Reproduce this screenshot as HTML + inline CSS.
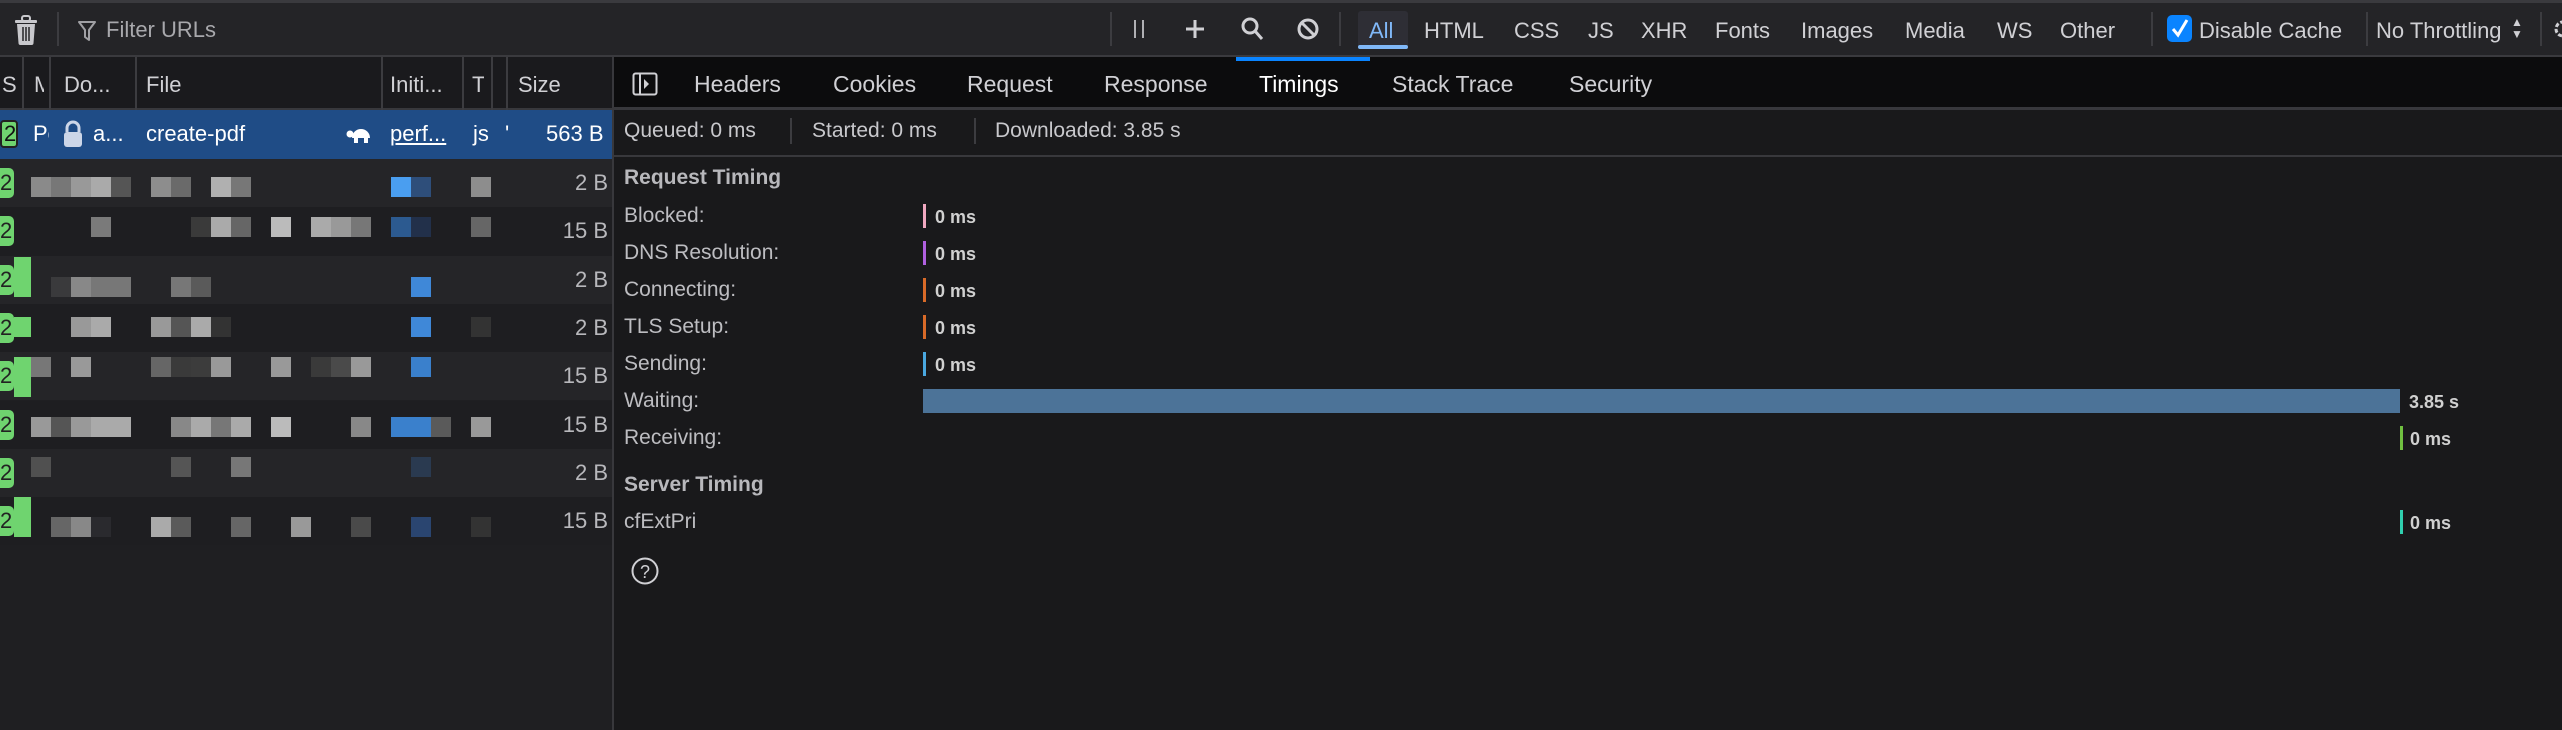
<!DOCTYPE html>
<html><head><meta charset="utf-8"><style>
*{margin:0;padding:0;box-sizing:border-box}
body{width:2562px;height:730px;background:#19191b;font-family:"Liberation Sans",sans-serif;color:#d0d0d4;position:relative;overflow:hidden}
.a{position:absolute;white-space:nowrap}
.t{font-size:22px;line-height:26px}
.sep{position:absolute;width:2px;background:#3c3c40}
.blk{position:absolute;width:20px;height:20px}
.tick{position:absolute;width:3px;height:24px}
.ms{position:absolute;font-size:18px;font-weight:bold;color:#d0d0d0}
.lbl{position:absolute;font-size:21px;color:#bdbdc1;left:624px}
</style></head><body>
<!-- toolbar -->
<div class="a" style="left:0;top:0;width:2562px;height:57px;background:#242427;border-top:3px solid #3a3a3e;border-bottom:2px solid #3a3a3e"></div>
<svg class="a" style="left:13px;top:14px" width="26" height="32" viewBox="0 0 26 32"><rect x="2" y="6" width="22" height="3" rx="1" fill="#c8c8cc"/><rect x="9" y="2" width="8" height="5" rx="2" fill="none" stroke="#c8c8cc" stroke-width="2"/><path d="M4 10h18l-1.5 19a2 2 0 0 1-2 2h-11a2 2 0 0 1-2-2z" fill="#c8c8cc"/><path d="M10 13v14M13 13v14M16 13v14" stroke="#242427" stroke-width="1.5"/></svg>
<div class="sep" style="left:57px;top:12px;height:34px"></div>
<svg class="a" style="left:78px;top:20px" width="18" height="22" viewBox="0 0 18 22"><path d="M1 2h16l-6 8v10l-4-3v-7z" fill="none" stroke="#a0a0a4" stroke-width="2" stroke-linejoin="round"/></svg>
<div class="a t" style="left:106px;top:17px;color:#a8a8ac">Filter URLs</div>
<div class="sep" style="left:1110px;top:12px;height:34px"></div>
<div class="a" style="left:1134px;top:20px;width:2px;height:18px;background:#b0b0b4"></div>
<div class="a" style="left:1142px;top:20px;width:2px;height:18px;background:#b0b0b4"></div>
<svg class="a" style="left:1184px;top:18px" width="22" height="22"><path d="M11 2v18M2 11h18" stroke="#d0d0d4" stroke-width="3"/></svg>
<svg class="a" style="left:1240px;top:16px" width="24" height="26"><circle cx="10" cy="10" r="7" fill="none" stroke="#d0d0d4" stroke-width="3"/><path d="M15 15l7 8" stroke="#d0d0d4" stroke-width="3"/></svg>
<svg class="a" style="left:1296px;top:17px" width="24" height="24"><circle cx="12" cy="12" r="9" fill="none" stroke="#d0d0d4" stroke-width="3"/><path d="M6 6l12 12" stroke="#d0d0d4" stroke-width="3"/></svg>
<div class="sep" style="left:1339px;top:12px;height:34px"></div>
<div class="a" style="left:1358px;top:11px;width:50px;height:38px;background:#2e2e35;border-radius:3px"></div>
<div class="a" style="left:1358px;top:45px;width:50px;height:4px;background:#80b8f8;border-radius:2px"></div>
<div class="a t" style="left:1369px;top:18px;color:#80b8f8">All</div>
<div class="a t" style="left:1424px;top:18px">HTML</div>
<div class="a t" style="left:1514px;top:18px">CSS</div>
<div class="a t" style="left:1588px;top:18px">JS</div>
<div class="a t" style="left:1641px;top:18px">XHR</div>
<div class="a t" style="left:1715px;top:18px">Fonts</div>
<div class="a t" style="left:1801px;top:18px">Images</div>
<div class="a t" style="left:1905px;top:18px">Media</div>
<div class="a t" style="left:1997px;top:18px">WS</div>
<div class="a t" style="left:2060px;top:18px">Other</div>
<div class="sep" style="left:2151px;top:12px;height:34px"></div>
<div class="a" style="left:2167px;top:15px;width:25px;height:27px;background:#0a84ff;border-radius:5px"></div>
<svg class="a" style="left:2170px;top:17px" width="20" height="22"><path d="M3 12l5 6L17 3" fill="none" stroke="#fff" stroke-width="3"/></svg>
<div class="a t" style="left:2199px;top:18px">Disable Cache</div>
<div class="sep" style="left:2366px;top:12px;height:34px"></div>
<div class="a t" style="left:2376px;top:18px">No Throttling</div>
<div class="a" style="left:2511px;top:16px;font-size:12px;line-height:12px;color:#d0d0d4">▲<br>▼</div>
<div class="sep" style="left:2540px;top:12px;height:34px"></div>
<svg class="a" style="left:2552px;top:18px" width="12" height="22"><circle cx="11" cy="11" r="7" fill="none" stroke="#d0d0d4" stroke-width="3" stroke-dasharray="4 2"/></svg>
<!-- left panel -->
<div class="a" style="left:0;top:57px;width:614px;height:673px;background:#1f1f22"></div>
<div class="a" style="left:0;top:57px;width:614px;height:53px;background:#1a1a1d;border-bottom:2px solid #38383c"></div>
<div class="sep" style="left:22px;top:57px;height:53px"></div>
<div class="sep" style="left:49px;top:57px;height:53px"></div>
<div class="sep" style="left:135px;top:57px;height:53px"></div>
<div class="sep" style="left:381px;top:57px;height:53px"></div>
<div class="sep" style="left:462px;top:57px;height:53px"></div>
<div class="sep" style="left:491px;top:57px;height:53px"></div>
<div class="sep" style="left:506px;top:57px;height:53px"></div>
<div class="a t" style="left:2px;top:72px">S</div>
<div class="a t" style="left:34px;top:72px;width:10px;overflow:hidden">M</div>
<div class="a t" style="left:64px;top:72px">Do...</div>
<div class="a t" style="left:146px;top:72px">File</div>
<div class="a t" style="left:390px;top:72px">Initi...</div>
<div class="a t" style="left:472px;top:72px;width:12px;overflow:hidden">T</div>
<div class="a t" style="left:518px;top:72px">Size</div>
<div id="rows"></div>
<!-- row 1 -->
<div class="a" style="left:0;top:110px;width:612px;height:49px;background:#1f4c86"></div>
<div class="a" style="left:0;top:120px;width:18px;height:28px;background:#6fd46f;border:2px solid #222;border-radius:4px;color:#111;font-size:22px;line-height:24px;overflow:hidden;padding-left:2px">2</div>
<div class="a t" style="left:33px;top:121px;color:#fff;width:16px;overflow:hidden">Po</div>
<svg class="a" style="left:62px;top:119px" width="22" height="30"><path d="M5 13V9a6 6 0 0 1 12 0v4" fill="none" stroke="#ccd6e8" stroke-width="3"/><rect x="2" y="13" width="18" height="15" rx="3" fill="#ccd6e8"/></svg>
<div class="a t" style="left:93px;top:121px;color:#fff">a...</div>
<div class="a t" style="left:146px;top:121px;color:#fff">create-pdf</div>
<svg class="a" style="left:346px;top:124px" width="26" height="20" viewBox="0 0 26 20"><path d="M6 14a9 9 0 0 1 18 0z" fill="#fff"/><circle cx="4" cy="10" r="3.5" fill="#fff"/><rect x="8" y="13" width="4" height="6" fill="#fff"/><rect x="18" y="13" width="4" height="6" fill="#fff"/></svg>
<div class="a t" style="left:390px;top:121px;color:#fff;text-decoration:underline">perf...</div>
<div class="a t" style="left:473px;top:121px;color:#fff">js</div>
<div class="a t" style="left:505px;top:121px;color:#fff">'</div>
<div class="a t" style="left:546px;top:121px;color:#fff">563 B</div>
<div class="a" style="left:612px;top:57px;width:2px;height:673px;background:#38383c"></div>
<!-- right panel -->
<div class="a" style="left:614px;top:57px;width:1948px;height:53px;background:#0c0c0d;border-bottom:3px solid #38383c"></div>
<svg class="a" style="left:632px;top:72px" width="26" height="24"><rect x="1.5" y="1.5" width="23" height="21" rx="2" fill="none" stroke="#d0d0d4" stroke-width="2"/><path d="M8 2v20" stroke="#d0d0d4" stroke-width="2"/><path d="M12 7l5 5-5 5z" fill="#d0d0d4"/></svg>
<div class="a t" style="left:694px;top:71px;font-size:23px">Headers</div>
<div class="a t" style="left:833px;top:71px;font-size:23px">Cookies</div>
<div class="a t" style="left:967px;top:71px;font-size:23px">Request</div>
<div class="a t" style="left:1104px;top:71px;font-size:23px">Response</div>
<div class="a" style="left:1236px;top:57px;width:134px;height:4px;background:#0a84ff"></div>
<div class="a t" style="left:1259px;top:71px;font-size:23px;color:#fff">Timings</div>
<div class="a t" style="left:1392px;top:71px;font-size:23px">Stack Trace</div>
<div class="a t" style="left:1569px;top:71px;font-size:23px">Security</div>
<div class="a" style="left:614px;top:110px;width:1948px;height:47px;border-bottom:2px solid #38383c"></div>
<div class="a" style="left:624px;top:119px;font-size:21px;color:#c8c8cc">Queued: 0 ms</div>
<div class="sep" style="left:790px;top:118px;height:26px"></div>
<div class="a" style="left:812px;top:119px;font-size:21px;color:#c8c8cc">Started: 0 ms</div>
<div class="sep" style="left:974px;top:118px;height:26px"></div>
<div class="a" style="left:995px;top:119px;font-size:21px;color:#c8c8cc">Downloaded: 3.85 s</div>
<div class="lbl" style="top:166px;font-weight:bold;color:#b8b8bc">Request Timing</div>
<div class="lbl" style="top:204px">Blocked:</div>
<div class="lbl" style="top:241px">DNS Resolution:</div>
<div class="lbl" style="top:278px">Connecting:</div>
<div class="lbl" style="top:315px">TLS Setup:</div>
<div class="lbl" style="top:352px">Sending:</div>
<div class="lbl" style="top:389px">Waiting:</div>
<div class="lbl" style="top:426px">Receiving:</div>
<div class="lbl" style="top:473px;font-weight:bold;color:#b8b8bc">Server Timing</div>
<div class="lbl" style="top:510px">cfExtPri</div>
<div class="tick" style="left:923px;top:204px;background:#f0a8c0"></div><div class="ms" style="left:935px;top:207px">0 ms</div>
<div class="tick" style="left:923px;top:241px;background:#b060e0"></div><div class="ms" style="left:935px;top:244px">0 ms</div>
<div class="tick" style="left:923px;top:278px;background:#d86a28"></div><div class="ms" style="left:935px;top:281px">0 ms</div>
<div class="tick" style="left:923px;top:315px;background:#d86a28"></div><div class="ms" style="left:935px;top:318px">0 ms</div>
<div class="tick" style="left:923px;top:352px;background:#4aa8e0"></div><div class="ms" style="left:935px;top:355px">0 ms</div>
<div class="a" style="left:923px;top:389px;width:1477px;height:24px;background:#4c7398"></div><div class="ms" style="left:2409px;top:392px">3.85 s</div>
<div class="tick" style="left:2400px;top:426px;background:#70c040"></div><div class="ms" style="left:2410px;top:429px">0 ms</div>
<div class="tick" style="left:2400px;top:510px;background:#30d0b0"></div><div class="ms" style="left:2410px;top:513px">0 ms</div>
<svg class="a" style="left:630px;top:556px" width="30" height="30"><circle cx="15" cy="15" r="12.5" fill="none" stroke="#d0d0d4" stroke-width="2"/><text x="15" y="22" font-size="18" text-anchor="middle" fill="#d0d0d4" font-family="Liberation Sans">?</text></svg>
<script>
(function(){
var rows=[
[177,"2 B",[[0,"#8a8a8a"],[1,"#777"],[2,"#999"],[3,"#aaa"],[4,"#555"],[6,"#8d8d8d"],[7,"#6a6a6a"],[9,"#b0b0b0"],[10,"#777"],[18,"#4a9ef0"],[19,"#2e4e7a"],[22,"#8d8d8d"]]],
[217,"15 B",[[3,"#7a7a7a"],[8,"#3a3a3a"],[9,"#aaa"],[10,"#666"],[12,"#bbb"],[14,"#aaa"],[15,"#999"],[16,"#777"],[18,"#2c5a90"],[19,"#22304a"],[22,"#666"]]],
[277,"2 B",[[1,"#3a3a3c"],[2,"#888"],[3,"#777"],[4,"#777"],[7,"#777"],[8,"#5a5a5a"],[19,"#3f88d8"]]],
[317,"2 B",[[2,"#999"],[3,"#aaa"],[6,"#999"],[7,"#555"],[8,"#aaa"],[9,"#333"],[19,"#3f88d8"],[22,"#333"]]],
[357,"15 B",[[0,"#777"],[2,"#999"],[6,"#666"],[7,"#3a3a3a"],[8,"#3c3c3c"],[9,"#999"],[12,"#999"],[14,"#3a3a3a"],[15,"#4a4a4a"],[16,"#999"],[19,"#3a80cc"]]],
[417,"15 B",[[0,"#999"],[1,"#555"],[2,"#999"],[3,"#aaa"],[4,"#aaa"],[7,"#888"],[8,"#aaa"],[9,"#777"],[10,"#aaa"],[12,"#bbb"],[16,"#888"],[18,"#3a80cc"],[19,"#3a80cc"],[20,"#5a5a5a"],[22,"#999"]]],
[457,"2 B",[[0,"#505050"],[7,"#555"],[10,"#777"],[19,"#2a3a50"]]],
[517,"15 B",[[1,"#666"],[2,"#888"],[3,"#2a2a2e"],[6,"#aaa"],[7,"#5a5a5a"],[10,"#666"],[13,"#999"],[16,"#4a4a4a"],[19,"#2a4570"],[22,"#333"]]]
];
var h="",g="";
var greens=[[0,0],[0,0],[257,297],[317,337],[357,397],[0,0],[0,0],[497,537]];
for(var i=0;i<8;i++){
 var ty=159+i*48.3;
 h+='<div class="a" style="left:0;top:'+ty+'px;width:612px;height:48.3px;background:'+(i%2==0?'#252528':'#1e1e21')+'"></div>';
 g+='<div class="a" style="left:0;top:'+(ty+9)+'px;width:14px;height:30px;background:#6fd46f;border-radius:0 5px 5px 0;color:#222;font-size:22px;line-height:30px;overflow:hidden">2</div>';
 if(greens[i][1])g+='<div class="a" style="left:14px;top:'+greens[i][0]+'px;width:17px;height:'+(greens[i][1]-greens[i][0])+'px;background:#6fd46f"></div>';
 g+='<div class="a t" style="right:'+(2562-608)+'px;top:'+(ty+11)+'px;color:#b8b8bc">'+rows[i][1]+'</div>';
 var b=rows[i][2];
 for(var j=0;j<b.length;j++){g+='<div class="blk" style="left:'+(31+b[j][0]*20)+'px;top:'+rows[i][0]+'px;background:'+b[j][1]+'"></div>';}
}
document.getElementById("rows").outerHTML=h+g;
})();
</script>
</body></html>
